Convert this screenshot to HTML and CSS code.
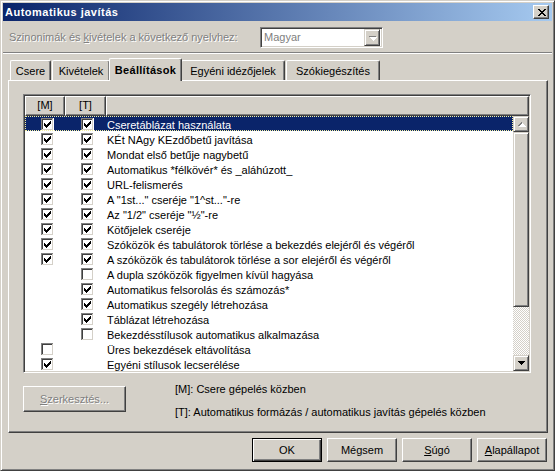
FILE: index.html
```
<!DOCTYPE html>
<html lang="hu">
<head>
<meta charset="utf-8">
<title>Automatikus javítás</title>
<link rel="stylesheet" href="styles.css">
</head>
<body>
<svg class="defs" width="0" height="0" aria-hidden="true">
  <symbol id="cb-off" viewBox="0 0 13 13">
    <path fill="#fff" d="M12 0h1v13H0v-1h12z"/>
    <path fill="#808080" d="M0 0h12v1H1v11H0z"/>
    <path fill="#d4d0c8" d="M11 1h1v11H1v-1h10z"/>
    <path fill="#404040" d="M1 1h10v1H2v9H1z"/>
    <path fill="#fff" d="M2 2h9v9H2z"/>
  </symbol>
  <symbol id="cb-on" viewBox="0 0 13 13">
    <path fill="#fff" d="M12 0h1v13H0v-1h12z"/>
    <path fill="#808080" d="M0 0h12v1H1v11H0z"/>
    <path fill="#d4d0c8" d="M11 1h1v11H1v-1h10z"/>
    <path fill="#404040" d="M1 1h10v1H2v9H1z"/>
    <path fill="#fff" d="M2 2h9v9H2z"/>
    <path fill="#000" d="M3 5h1v3H3zM4 6h1v3H4zM5 7h1v3H5zM6 6h1v3H6zM7 5h1v3H7zM8 4h1v3H8zM9 3h1v3H9z"/>
  </symbol>
  <symbol id="arr-down" viewBox="0 0 7 4">
    <path d="M0 0h7v1H0zM1 1h5v1H1zM2 2h3v1H2zM3 3h1v1H3z"/>
  </symbol>
  <symbol id="arr-up" viewBox="0 0 7 4">
    <path d="M3 0h1v1H3zM2 1h3v1H2zM1 2h5v1H1zM0 3h7v1H0z"/>
  </symbol>
</svg>

<div class="window">
  <div class="titlebar">
    <span class="title">Automatikus javítás</span>
    <span class="close">
      <svg width="8" height="7" viewBox="0 0 8 7"><path fill="#000" d="M0 0h2v1H0zM6 0h2v1H6zM1 1h2v1H1zM5 1h2v1H5zM2 2h4v1H2zM3 3h2v1H3zM2 4h4v1H2zM1 5h2v1H1zM5 5h2v1H5zM0 6h2v1H0zM6 6h2v1H6z"/></svg>
    </span>
  </div>

  <div class="langrow">
    <span class="langlabel disabled">Szinonimák és <u>k</u>ivételek a következő nyelvhez:</span>
    <div class="combo">
      <span class="combo-text">Magyar</span>
      <span class="combo-btn">
        <svg class="arr shadow" width="7" height="4"><use href="#arr-down"/></svg>
        <svg class="arr gray" width="7" height="4"><use href="#arr-down"/></svg>
      </span>
    </div>
  </div>

  <div class="sep"></div>

  <div class="tabs">
    <div class="tab w-csere">Csere</div>
    <div class="tab w-kiv">Kivételek</div>
    <div class="tab sel w-beall">Beállítások</div>
    <div class="tab w-egyeni">Egyéni idézőjelek</div>
    <div class="tab w-szok">Szókiegészítés</div>
  </div>

  <div class="panel">
    <div class="listview">
      <div class="lv-header">
        <div class="hcell hm">[M]</div>
        <div class="hcell ht">[T]</div>
        <div class="hcell hrest"></div>
      </div>
      <div class="lv-body">
        <div class="rows">
          <div class="row sel"><span class="cm"><svg class="cb"><use href="#cb-on"/></svg></span><span class="ct"><svg class="cb"><use href="#cb-on"/></svg></span><span class="txt">Cseretáblázat használata</span></div>
          <div class="row"><span class="cm"><svg class="cb"><use href="#cb-on"/></svg></span><span class="ct"><svg class="cb"><use href="#cb-on"/></svg></span><span class="txt">KÉt NAgy KEzdőbetű javítása</span></div>
          <div class="row"><span class="cm"><svg class="cb"><use href="#cb-on"/></svg></span><span class="ct"><svg class="cb"><use href="#cb-on"/></svg></span><span class="txt">Mondat első betűje nagybetű</span></div>
          <div class="row"><span class="cm"><svg class="cb"><use href="#cb-on"/></svg></span><span class="ct"><svg class="cb"><use href="#cb-on"/></svg></span><span class="txt">Automatikus *félkövér* és _aláhúzott_</span></div>
          <div class="row"><span class="cm"><svg class="cb"><use href="#cb-on"/></svg></span><span class="ct"><svg class="cb"><use href="#cb-on"/></svg></span><span class="txt">URL-felismerés</span></div>
          <div class="row"><span class="cm"><svg class="cb"><use href="#cb-on"/></svg></span><span class="ct"><svg class="cb"><use href="#cb-on"/></svg></span><span class="txt">A "1st..." cseréje "1^st..."-re</span></div>
          <div class="row"><span class="cm"><svg class="cb"><use href="#cb-on"/></svg></span><span class="ct"><svg class="cb"><use href="#cb-on"/></svg></span><span class="txt">Az "1/2" cseréje "½"-re</span></div>
          <div class="row"><span class="cm"><svg class="cb"><use href="#cb-on"/></svg></span><span class="ct"><svg class="cb"><use href="#cb-on"/></svg></span><span class="txt">Kötőjelek cseréje</span></div>
          <div class="row"><span class="cm"><svg class="cb"><use href="#cb-on"/></svg></span><span class="ct"><svg class="cb"><use href="#cb-on"/></svg></span><span class="txt">Szóközök és tabulátorok törlése a bekezdés elejéről és végéről</span></div>
          <div class="row"><span class="cm"><svg class="cb"><use href="#cb-on"/></svg></span><span class="ct"><svg class="cb"><use href="#cb-on"/></svg></span><span class="txt">A szóközök és tabulátorok törlése a sor elejéről és végéről</span></div>
          <div class="row"><span class="cm"></span><span class="ct"><svg class="cb"><use href="#cb-off"/></svg></span><span class="txt">A dupla szóközök figyelmen kívül hagyása</span></div>
          <div class="row"><span class="cm"></span><span class="ct"><svg class="cb"><use href="#cb-on"/></svg></span><span class="txt">Automatikus felsorolás és számozás*</span></div>
          <div class="row"><span class="cm"></span><span class="ct"><svg class="cb"><use href="#cb-on"/></svg></span><span class="txt">Automatikus szegély létrehozása</span></div>
          <div class="row"><span class="cm"></span><span class="ct"><svg class="cb"><use href="#cb-on"/></svg></span><span class="txt">Táblázat létrehozása</span></div>
          <div class="row"><span class="cm"></span><span class="ct"><svg class="cb"><use href="#cb-off"/></svg></span><span class="txt">Bekezdésstílusok automatikus alkalmazása</span></div>
          <div class="row"><span class="cm"><svg class="cb"><use href="#cb-off"/></svg></span><span class="ct"></span><span class="txt">Üres bekezdések eltávolítása</span></div>
          <div class="row"><span class="cm"><svg class="cb"><use href="#cb-on"/></svg></span><span class="ct"></span><span class="txt">Egyéni stílusok lecserélése</span></div>
        </div>
        <div class="vscroll">
          <div class="sbtn">
            <svg class="arr shadow" width="7" height="4"><use href="#arr-up"/></svg>
            <svg class="arr gray" width="7" height="4"><use href="#arr-up"/></svg>
          </div>
          <div class="thumb"></div>
          <div class="track"></div>
          <div class="sbtn">
            <svg class="arr black" width="7" height="4"><use href="#arr-down"/></svg>
          </div>
        </div>
      </div>
    </div>

    <div class="below">
      <div class="btn edit disabled"><span><u>S</u>zerkesztés...</span></div>
      <div class="legend">
        <div>[M]: Csere gépelés közben</div>
        <div>[T]: Automatikus formázás / automatikus javítás gépelés közben</div>
      </div>
    </div>
  </div>

  <div class="buttons">
    <div class="btn default">OK</div>
    <div class="btn">Mégsem</div>
    <div class="btn"><span><u>S</u>úgó</span></div>
    <div class="btn"><span><u>A</u>lapállapot</span></div>
  </div>
</div>
</body>
</html>
```
FILE: styles.css
```
* { box-sizing: border-box; }

html, body {
  margin: 0;
  padding: 0;
  background: #d4d0c8;
}

body {
  font-family: "Liberation Sans", Arial, sans-serif;
  font-size: 11px;
  color: #000;
}

.defs {
  position: absolute;
  width: 0;
  height: 0;
  overflow: hidden;
}

.window {
  width: 555px;
  height: 471px;
  background: #d4d0c8;
  border: 1px solid;
  border-color: #d4d0c8 #404040 #404040 #d4d0c8;
  box-shadow: inset 1px 1px #fff, inset -1px -1px #808080;
  padding: 2px;
  display: flex;
  flex-direction: column;
}

/* title bar */
.titlebar {
  height: 18px;
  background: linear-gradient(to right, #0a246a, #a6caf0);
  display: flex;
  align-items: center;
  padding-left: 2px;
  padding-right: 3px;
}

.title {
  color: #fff;
  font-weight: bold;
  letter-spacing: 0.5px;
  line-height: 18px;
  flex: 1;
}

.close {
  width: 16px;
  height: 14px;
  background: #d4d0c8;
  border: 1px solid;
  border-color: #fff #404040 #404040 #fff;
  box-shadow: inset -1px -1px #808080;
  display: flex;
  align-items: center;
  justify-content: center;
  padding-left: 1px;
}

/* language row */
.langrow {
  margin-top: 6px;
  height: 21px;
  display: flex;
  align-items: center;
  padding-left: 6px;
}

.langlabel {
  flex: 0 0 251px;
  line-height: 13px;
}

.disabled {
  color: #808080;
  text-shadow: 1px 1px 0 #fff;
}

.combo {
  width: 123px;
  height: 21px;
  background: #fff;
  border: 1px solid;
  border-color: #808080 #fff #fff #808080;
  box-shadow: inset 1px 1px #404040, inset -1px -1px #d4d0c8;
  padding: 2px;
  display: flex;
  align-items: center;
}

.combo-text {
  flex: 1;
  color: #808080;
  padding-left: 1px;
  line-height: 17px;
}

.combo-btn {
  width: 16px;
  height: 17px;
  background: #d4d0c8;
  border: 1px solid;
  border-color: #d4d0c8 #404040 #404040 #d4d0c8;
  box-shadow: inset 1px 1px #fff, inset -1px -1px #808080;
  position: relative;
  display: flex;
  align-items: center;
  justify-content: center;
}

.arr { display: block; }
.arr.gray { fill: #808080; }
.arr.black { fill: #000; }
.arr.shadow {
  fill: #fff;
  position: absolute;
  transform: translate(1px, 1px);
}

.sep {
  margin-top: 4px;
  height: 2px;
  border-top: 1px solid #808080;
  border-bottom: 1px solid #fff;
}

/* tabs */
.tabs {
  margin-top: 4px;
  height: 22px;
  display: flex;
  align-items: flex-end;
  padding-left: 7px;
  gap: 1px;
}

.tab {
  height: 20px;
  border-top: 1px solid #fff;
  border-left: 1px solid #fff;
  border-right: 1px solid #404040;
  box-shadow: inset -1px 0 #808080;
  border-radius: 2px 2px 0 0;
  background: #d4d0c8;
  text-align: center;
  line-height: 18px;
  padding-top: 1px;
  white-space: nowrap;
}

.tab.sel {
  height: 23px;
  margin: 0 -2px -1px -2px;
  padding-top: 2px;
  font-weight: bold;
  letter-spacing: 0.3px;
  position: relative;
  z-index: 2;
}

.w-csere { width: 41px; }
.w-kiv { width: 58px; }
.w-beall { width: 73px; }
.w-egyeni { width: 104px; }
.w-szok { width: 94px; }

/* panel */
.panel {
  margin-left: 5px;
  width: 540px;
  height: 353px;
  border: 1px solid;
  border-color: #fff #404040 #404040 #fff;
  box-shadow: inset -1px -1px #808080;
  padding: 13px 0 0 14px;
}

.listview {
  width: 508px;
  height: 279px;
  background: #fff;
  border: 1px solid;
  border-color: #808080 #fff #fff #808080;
  box-shadow: inset 1px 1px #404040, inset -1px -1px #d4d0c8;
  padding: 1px;
  display: flex;
  flex-direction: column;
}

.lv-header {
  height: 20px;
  display: flex;
  flex: 0 0 20px;
}

.hcell {
  height: 20px;
  background: #d4d0c8;
  border: 1px solid;
  border-color: #fff #404040 #404040 #fff;
  box-shadow: inset -1px -1px #808080;
  text-align: center;
  line-height: 17px;
}

.hm { width: 40px; }
.ht { width: 41px; }
.hrest { flex: 1; }

.lv-body {
  flex: 1;
  display: flex;
  min-height: 0;
}

.rows {
  flex: 1;
  overflow: hidden;
}

.row {
  height: 15px;
  display: flex;
  align-items: flex-start;
  white-space: nowrap;
}

.row.sel {
  background: #0a246a;
  color: #fff;
  outline: 1px dotted #f4f0a0;
  outline-offset: -1px;
}

.cm, .ct {
  height: 15px;
  padding-left: 16px;
  padding-top: 2px;
}
.cm { width: 40px; }
.ct { width: 41px; }

.cb {
  display: block;
  width: 13px;
  height: 13px;
}

.txt {
  padding-left: 1px;
  margin-top: 2px;
  line-height: 14px;
}

/* scrollbar */
.vscroll {
  width: 16px;
  display: flex;
  flex-direction: column;
}

.sbtn, .thumb {
  background: #d4d0c8;
  border: 1px solid;
  border-color: #d4d0c8 #404040 #404040 #d4d0c8;
  box-shadow: inset 1px 1px #fff, inset -1px -1px #808080;
}

.sbtn {
  height: 16px;
  position: relative;
  display: flex;
  align-items: center;
  justify-content: center;
}

.thumb { height: 175px; }

.track {
  flex: 1;
  background: repeating-conic-gradient(#fff 0 25%, #d4d0c8 0 50%) 0 0 / 2px 2px;
}

/* below list */
.below {
  margin-top: 9px;
  display: flex;
  align-items: flex-start;
}

.btn {
  width: 70px;
  height: 24px;
  background: #d4d0c8;
  border: 1px solid;
  border-color: #fff #404040 #404040 #fff;
  box-shadow: inset -1px -1px #808080;
  display: flex;
  align-items: center;
  justify-content: center;
  line-height: 13px;
}

.btn.default {
  border-color: #000;
  box-shadow: inset 1px 1px #fff, inset -1px -1px #404040, inset -2px -2px #808080;
}

.btn.edit {
  width: 103px;
  height: 26px;
  margin-top: 4px;
}

.legend {
  margin-left: 49px;
  display: flex;
  flex-direction: column;
  gap: 9px;
  line-height: 14px;
}

/* dialog buttons */
.buttons {
  margin-top: 5px;
  display: flex;
  justify-content: flex-end;
  gap: 5px;
  padding-right: 5px;
}
```
